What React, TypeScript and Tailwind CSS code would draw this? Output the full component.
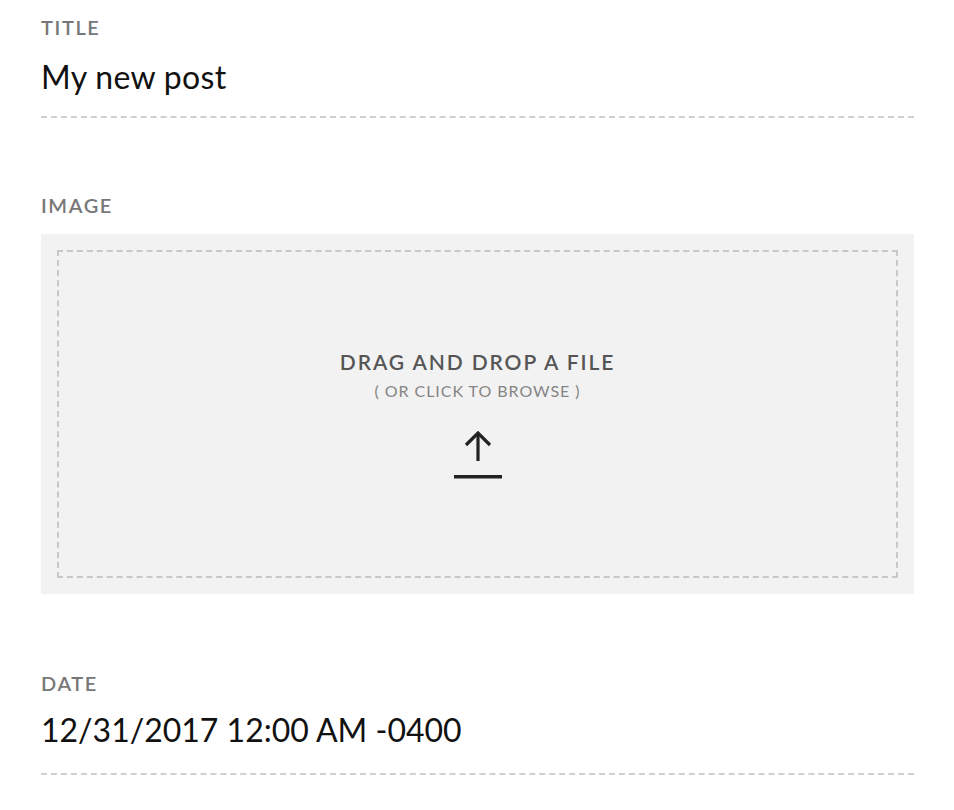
import { useState } from "react";

/* Post editor form: title, image drop zone, date */

const font = { fontFamily: '"Lato", "Noto Sans", sans-serif' };

function Label({ children }: { children: React.ReactNode }) {
  return (
    <div className="text-[20px] leading-6 font-semibold tracking-[0.08em] text-[#777777]">
      {children}
    </div>
  );
}

function UploadIcon() {
  return (
    <svg width="48" height="48" viewBox="0 0 48 48" fill="none">
      <path d="M24 2.5 V30" stroke="#222" strokeWidth="3.2" />
      <path d="M12 14 L24 2 L36 14" stroke="#222" strokeWidth="3.2" />
      <rect x="0" y="44" width="48" height="3.5" fill="#222" />
    </svg>
  );
}

export default function App() {
  const [title, setTitle] = useState("My new post");
  const [date, setDate] = useState("12/31/2017 12:00 AM -0400");

  return (
    <div className="min-h-screen bg-white pl-[41px] pr-10 pt-[15px]" style={font}>
      <div className="w-[873px]">
        {/* Title */}
        <Label>TITLE</Label>
        <input
          value={title}
          onChange={(e) => setTitle(e.target.value)}
          className="mt-[18px] block w-full bg-transparent text-[32px] leading-10 tracking-[0.01em] text-[#111] pb-[19px] outline-none border-b-2 border-dashed border-[#d0d0d0]"
          style={font}
        />

        {/* Image */}
        <div className="mt-[75px]">
          <Label>IMAGE</Label>
          <div className="mt-[17px] h-[360px] bg-[#f2f2f2] p-4 cursor-pointer">
            <div className="h-full border-2 border-dashed border-[#c8c8c8] flex flex-col items-center justify-center">
              <div className="text-[21px] leading-6 font-semibold tracking-[0.09em] text-[#555]">
                DRAG AND DROP A FILE
              </div>
              <div className="mt-[7px] text-[16px] leading-5 font-normal tracking-[0.06em] text-[#858585]">
                ( OR CLICK TO BROWSE )
              </div>
              <div className="mt-[30px]">
                <UploadIcon />
              </div>
            </div>
          </div>
        </div>

        {/* Date */}
        <div className="mt-[77px]">
          <Label>DATE</Label>
          <input
            value={date}
            onChange={(e) => setDate(e.target.value)}
            className="mt-[15px] block w-full bg-transparent text-[32px] leading-10 text-[#111] pb-[23px] outline-none border-b-2 border-dashed border-[#d0d0d0]"
            style={font}
          />
        </div>
      </div>
    </div>
  );
}
